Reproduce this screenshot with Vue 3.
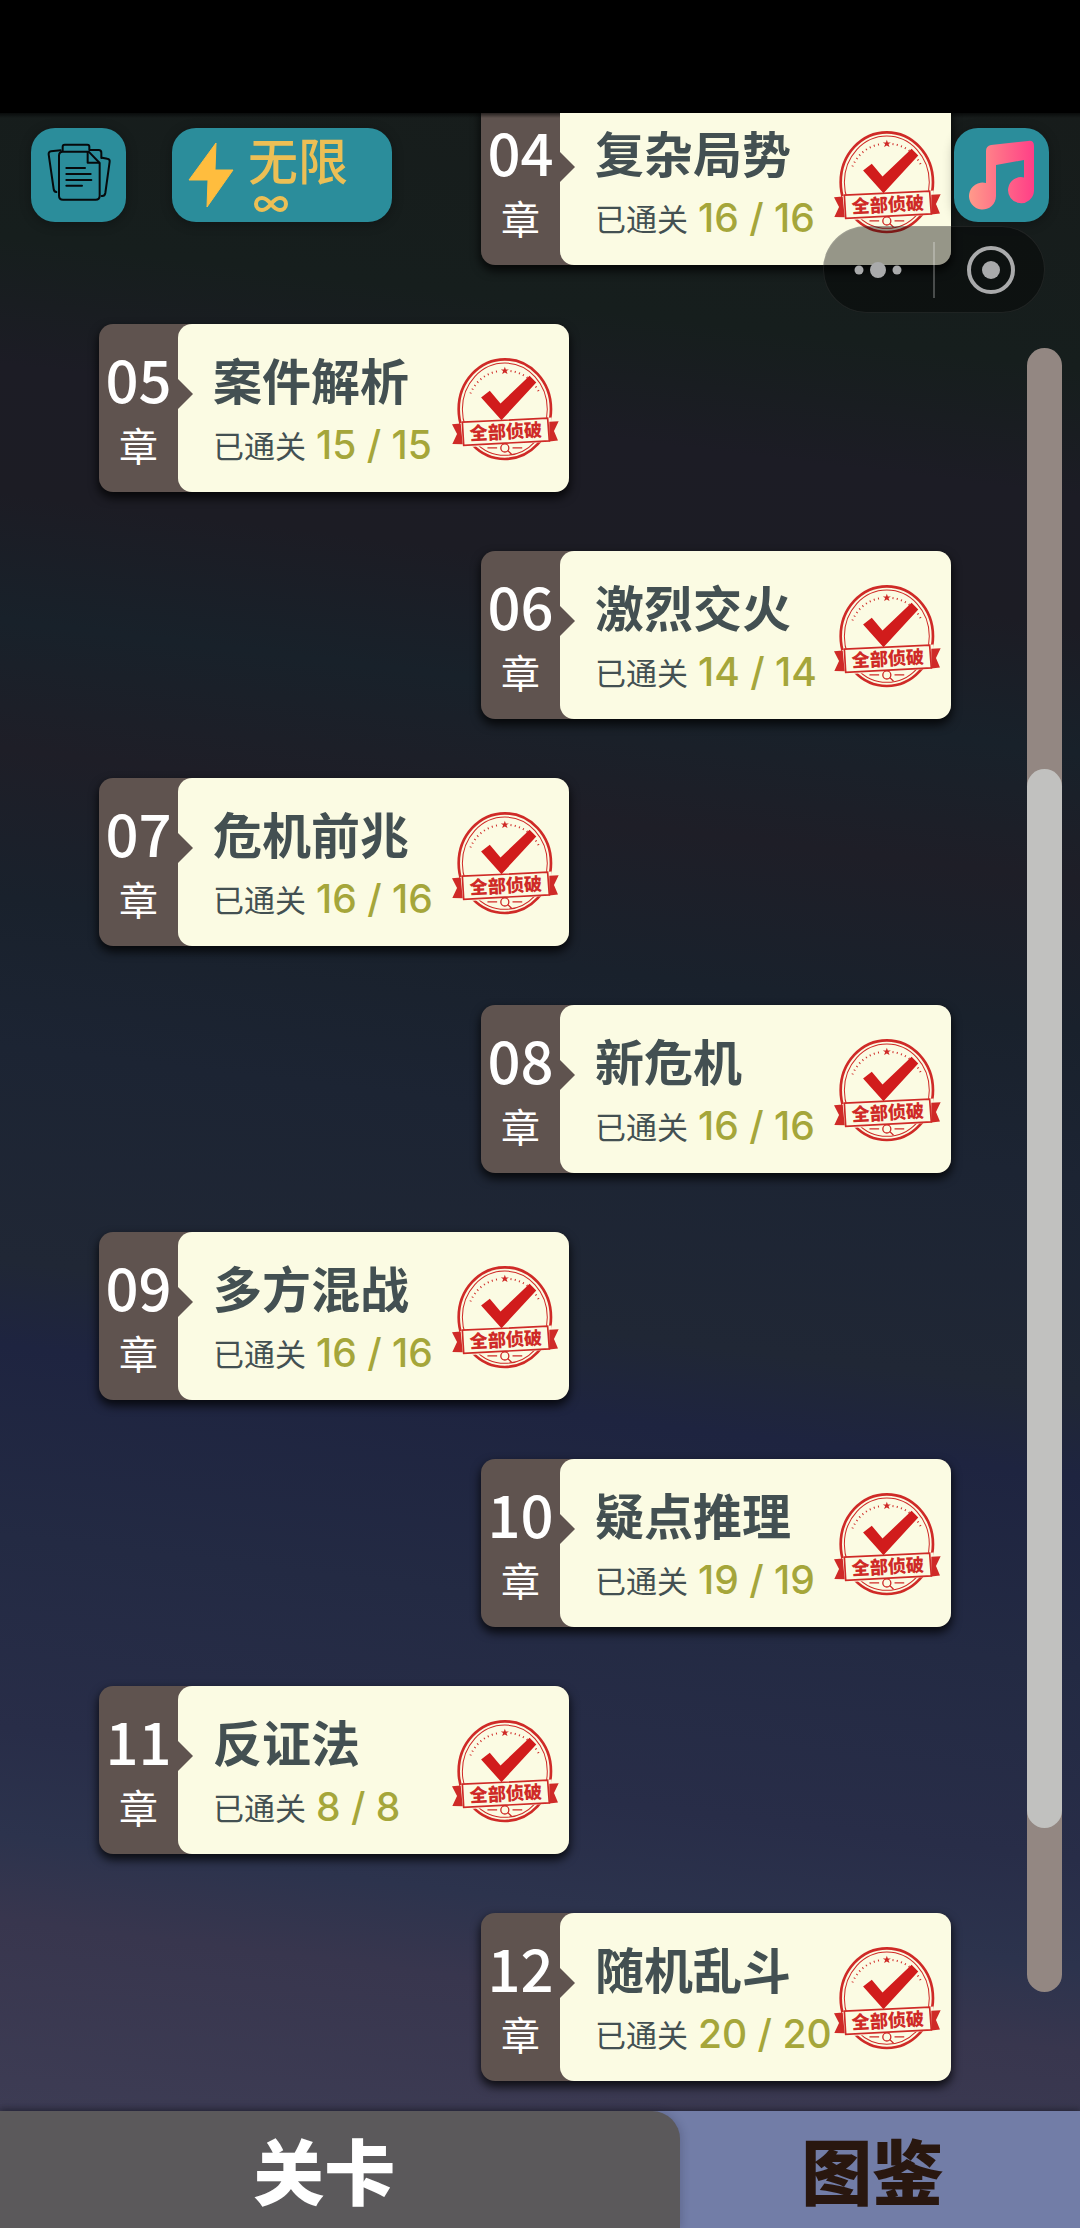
<script setup>
const chapters = [
  { no: '04', title: '复杂局势', total: 16 },
  { no: '05', title: '案件解析', total: 15 },
  { no: '06', title: '激烈交火', total: 14 },
  { no: '07', title: '危机前兆', total: 16 },
  { no: '08', title: '新危机', total: 16 },
  { no: '09', title: '多方混战', total: 16 },
  { no: '10', title: '疑点推理', total: 19 },
  { no: '11', title: '反证法', total: 8 },
  { no: '12', title: '随机乱斗', total: 20 },
]
</script>

<template>
  <div class="page">
    <div class="status-bar"></div>

    <main class="stage">
      <div class="viewport">
        <ul class="chapters">
          <li v-for="c in chapters" :key="c.no">
            <button type="button" class="card">
              <span class="tab">
                <span class="no">{{ c.no }}</span>
                <span class="unit">章</span>
              </span>
              <span class="body">
                <span class="info">
                  <span class="title">{{ c.title }}</span>
                  <span class="progress">
                    <span class="label">已通关</span>
                    <span class="count">{{ c.total }} / {{ c.total }}</span>
                  </span>
                </span>
                <svg class="stamp" viewBox="36 22 320 308" aria-hidden="true">
                  <g fill="none" stroke="#cf2a27">
                    <ellipse cx="194" cy="175" rx="138" ry="149" stroke-width="8" />
                    <ellipse cx="194" cy="175" rx="127" ry="138" stroke-width="3" />
                    <path d="M91 128A108 116 0 0 1 178 61M211 61A108 116 0 0 1 298 128" stroke-width="6" stroke-dasharray="3 10" />
                  </g>
                  <path d="M194 48l3 8h9l-7 5 3 9-8-5-8 5 3-9-7-5h9z" fill="#cf2a27" />
                  <path d="M123 140l26-20 32 38 87-83 20 20-104 113z" fill="#d11c1c" />
                  <path d="M60 216L334 200L336 272L64 290z" fill="#fbfbe3" />
                  <g fill="#cf2a27">
                    <path d="M36 220l26-2 6 62-31-1 14-30z" />
                    <path d="M327 213l28-2-14 29 12 29-26 3z" />
                  </g>
                  <path d="M67 214L322 202L327 270L71 283z" fill="#fbfbe3" stroke="#cf2a27" stroke-width="5" />
                  <text x="197" y="262" transform="rotate(-3 197 243)" text-anchor="middle">全部侦破</text>
                  <g fill="none" stroke="#cf2a27" stroke-width="4">
                    <circle cx="194" cy="291" r="12" />
                    <path d="M203 299l11 11M142 291h29M217 291h29" />
                  </g>
                </svg>
              </span>
            </button>
          </li>
        </ul>
      </div>

      <div class="toolbar">
        <button type="button" class="tool square" aria-label="档案">
          <svg viewBox="93 84 285 282" fill="none" stroke="#06090b" stroke-width="6" stroke-linejoin="round" stroke-linecap="round">
            <path d="M188 152V140q0-6 6-6h68q6 0 6 6v10h28q8 0 8 8v16" />
            <path d="M182 151l-29 3q-8 1-7 9l15 104q1 8 8 9" />
            <path d="M306 173l16 3q8 1 7 9l-13 94q-2 10-11 9" />
            <path d="M188 155h78l33 34v98q0 12-12 12h-98q-12 0-12-12V167q0-12 11-12z" />
            <path d="M263 157v31h34M199 204h56M199 222h73M199 240h75M199 257h47" />
          </svg>
        </button>
        <button type="button" class="tool energy">
          <svg viewBox="0 0 70 94" aria-hidden="true">
            <path d="M44 15L43 42H61L35 79L36 52H17z" fill="#ffbd3e" stroke="#ffbd3e" stroke-linejoin="round" />
          </svg>
          <span class="energy-text">
            <span>无限</span>
            <svg viewBox="0 0 34 18" role="img" aria-label="∞">
              <path d="M17 9C13 4 11 3 8 3a6 6 0 0 0 0 12c3 0 5-1 9-6s6-6 9-6a6 6 0 0 1 0 12c-3 0-5-1-9-6z" fill="none" stroke="#ecbf55" stroke-width="4" />
            </svg>
          </span>
        </button>
        <button type="button" class="tool square music" aria-label="音乐">
          <svg viewBox="0 0 95 94">
            <defs>
              <linearGradient id="note" x1="15" y1="0" x2="80" y2="0" gradientUnits="userSpaceOnUse">
                <stop offset="0" stop-color="#ff9a8a" />
                <stop offset=".45" stop-color="#ff7088" />
                <stop offset="1" stop-color="#ff3f87" />
              </linearGradient>
            </defs>
            <path d="M32 23q0-5 5-6l37-4q6-1 6 5v45a13 13 0 1 1-10-13.500V32l-28 5v31a13.500 13.500 0 1 1-10-13z" fill="url(#note)" />
          </svg>
        </button>
      </div>

      <div class="capsule">
        <button type="button" aria-label="更多">
          <svg viewBox="0 0 110 87" fill="#a9aaab">
            <circle cx="36" cy="44" r="4.500" /><circle cx="55" cy="44" r="8" /><circle cx="74" cy="44" r="4.500" />
          </svg>
        </button>
        <span class="divider"></span>
        <button type="button" aria-label="关闭">
          <svg viewBox="0 0 110 87">
            <circle cx="56" cy="44" r="22" fill="none" stroke="#a9aaab" stroke-width="4" />
            <circle cx="56" cy="44" r="9" fill="#a9aaab" />
          </svg>
        </button>
      </div>

      <div class="scrollbar"><div class="thumb"></div></div>
    </main>

    <nav class="tabs">
      <button type="button" class="active">关卡</button>
      <button type="button">图鉴</button>
    </nav>
  </div>
</template>

<style>
body {
  margin: 0;
  background: #3d3c54;
}
</style>

<style scoped>
.page {
  display: flex;
  flex-direction: column;
  min-height: 100vh;
  font-family: "Noto Sans CJK SC", sans-serif;
}
button {
  margin: 0;
  padding: 0;
  border: 0;
  background: none;
  color: inherit;
  font: inherit;
  text-align: left;
  cursor: pointer;
}
svg {
  display: block;
}
.status-bar {
  height: 113px;
  background: #000;
}
.stage {
  position: relative;
  flex: 1;
  background: linear-gradient(187deg, #171c1b 0%, #161e1d 12%, #1c1c25 18%, #1c1c24 24%, #18212a 30%, #1e1e27 36%, #19212c 43%, #1c2433 50%, #202735 60%, #1e2440 64%, #232a43 73%, #282d48 82%, #2c334d 87%, #38364e 91%, #3d3c54 100%);
}
.viewport {
  overflow: hidden;
}
.viewport::before {
  content: "";
  position: absolute;
  inset: 0 0 auto;
  height: 5px;
  background: linear-gradient(rgba(0, 0, 0, 0.6), transparent);
}
.chapters {
  display: flex;
  flex-direction: column;
  gap: 59px;
  margin: -16px 0 0;
  padding: 0 129px 30px 99px;
  list-style: none;
}
.chapters li {
  align-self: flex-start;
}
.chapters li:nth-child(odd) {
  align-self: flex-end;
}
.card {
  display: flex;
  width: 470px;
  height: 168px;
  border-radius: 14px;
  background: #5f534f;
  box-shadow: 0 5px 10px 1px rgba(0, 0, 0, 0.75);
}
.tab {
  display: flex;
  flex-direction: column;
  align-items: center;
  gap: 16px;
  width: 79px;
  padding-top: 24px;
  color: #fff;
}
.no {
  font-size: 58px;
  font-weight: 500;
  line-height: 60px;
}
.unit {
  font-size: 39px;
  line-height: 40px;
}
.body {
  position: relative;
  display: flex;
  flex: 1;
  align-self: stretch;
  padding: 25px 0 0 35px;
  border-radius: 14px;
  background: #fbfbe3;
}
.body::before {
  content: "";
  position: absolute;
  left: 0;
  top: 55px;
  border: 15px solid transparent;
  border-left-color: #5f534f;
  border-right-width: 0;
}
.info {
  display: flex;
  flex-direction: column;
  gap: 16px;
}
.title {
  color: #435052;
  font-size: 49px;
  font-weight: 700;
  line-height: 60px;
}
.progress {
  display: flex;
  align-items: center;
  gap: 10px;
  line-height: 40px;
  white-space: nowrap;
}
.label {
  color: #435052;
  font-size: 31px;
}
.count {
  color: #a5a63a;
  font-family: Inter, sans-serif;
  font-size: 39px;
  font-weight: 500;
}
.stamp {
  position: absolute;
  right: 10px;
  top: 34px;
  width: 107px;
  height: 103px;
}
.stamp text {
  fill: #cf2a27;
  font-size: 54px;
  font-weight: 900;
}
.toolbar {
  position: absolute;
  top: 15px;
  left: 31px;
  right: 31px;
  display: flex;
  gap: 46px;
}
.tool {
  height: 94px;
  border-radius: 24px;
  background: #2b8d9b;
  box-shadow: 0 2px 12px rgba(0, 0, 0, 0.3);
}
.square {
  width: 95px;
}
.square svg {
  width: 95px;
  height: 94px;
}
.music {
  margin-left: auto;
}
.energy {
  display: flex;
  width: 220px;
}
.energy > svg {
  width: 70px;
  height: 94px;
}
.energy-text {
  display: flex;
  flex-direction: column;
  gap: 10px;
  padding: 3px 0 0 6px;
  color: #ecbf55;
  font-size: 50px;
  font-weight: 500;
  line-height: 54px;
}
.energy-text svg {
  width: 34px;
  height: 18px;
  margin-left: 6px;
}
.capsule {
  position: absolute;
  top: 113px;
  right: 35px;
  display: flex;
  align-items: center;
  border-radius: 44px;
  background: rgba(0, 0, 0, 0.4);
  box-shadow: inset 0 0 0 1px rgba(255, 255, 255, 0.08);
}
.capsule svg {
  width: 110px;
  height: 87px;
}
.divider {
  width: 2px;
  height: 56px;
  background: rgba(255, 255, 255, 0.25);
}
.scrollbar {
  position: absolute;
  top: 235px;
  right: 18px;
  bottom: 119px;
  width: 35px;
  border-radius: 18px;
  background: #938782;
}
.thumb {
  position: relative;
  top: 25.600%;
  height: 64.400%;
  border-radius: 18px;
  background: #c1c1bf;
}
.tabs {
  position: relative;
  display: flex;
  background: #727da7;
  box-shadow: 0 -2px 6px rgba(20, 20, 30, 0.5);
}
.tabs button {
  flex: 1;
  height: 117px;
  padding: 0 16px 4px 0;
  color: #29170f;
  font-size: 71px;
  font-weight: 900;
  line-height: 112px;
  text-align: center;
}
.tabs .active {
  flex: 0 0 auto;
  box-sizing: border-box;
  width: 63%;
  padding-right: 32px;
  border-radius: 0 28px 0 0;
  background: #5b595b;
  box-shadow: 2px 0 8px rgba(30, 30, 50, 0.2);
  color: #fff;
}
</style>
